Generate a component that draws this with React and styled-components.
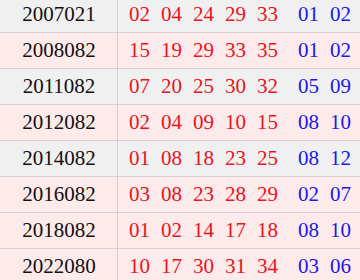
import React from "react";
import styled, { createGlobalStyle } from "styled-components";

const Global = createGlobalStyle`
  html, body { margin: 0; padding: 0; background: #ffffff; overflow: hidden; }
  body { font-family: "Liberation Serif", "Times New Roman", serif; }
`;

const Table = styled.div`
  width: 360px;
  margin-top: -3px;
  display: flex;
  flex-direction: column;
`;

const Row = styled.div`
  display: grid;
  grid-template-columns: 118px 1fr;
  height: 35px;
  border-bottom: 1px solid #d8cece;
  background: ${(p) => (p.$gray ? "#f0f0f0" : "#fdeaea")};
  font-size: 21px;
  line-height: 35px;
`;

const Issue = styled.div`
  border-right: 1px solid #d8cece;
  color: #111111;
  text-align: center;
  padding-left: 1px;
`;

const Balls = styled.div`
  display: flex;
  align-items: center;
  padding-left: 11px;
`;

const Ball = styled.span`
  display: inline-block;
  width: 21px;
  margin-right: 11px;
  color: ${(p) => (p.$blue ? "#1a1ae6" : "#e8141e")};
  margin-left: ${(p) => (p.$first ? "9px" : "0")};
`;

const rows = [
  ["2007021", ["02", "04", "24", "29", "33"], ["01", "02"], true],
  ["2008082", ["15", "19", "29", "33", "35"], ["01", "02"], false],
  ["2011082", ["07", "20", "25", "30", "32"], ["05", "09"], true],
  ["2012082", ["02", "04", "09", "10", "15"], ["08", "10"], false],
  ["2014082", ["01", "08", "18", "23", "25"], ["08", "12"], true],
  ["2016082", ["03", "08", "23", "28", "29"], ["02", "07"], false],
  ["2018082", ["01", "02", "14", "17", "18"], ["08", "10"], false],
  ["2022080", ["10", "17", "30", "31", "34"], ["03", "06"], false],
];

export default function App() {
  return (
    <>
      <Global />
      <Table>
        {rows.map(([issue, reds, blues, gray]) => (
          <Row key={issue} $gray={gray}>
            <Issue>{issue}</Issue>
            <Balls>
              {reds.map((n, i) => (
                <Ball key={"r" + i}>{n}</Ball>
              ))}
              {blues.map((n, i) => (
                <Ball key={"b" + i} $blue $first={i === 0}>
                  {n}
                </Ball>
              ))}
            </Balls>
          </Row>
        ))}
      </Table>
    </>
  );
}
